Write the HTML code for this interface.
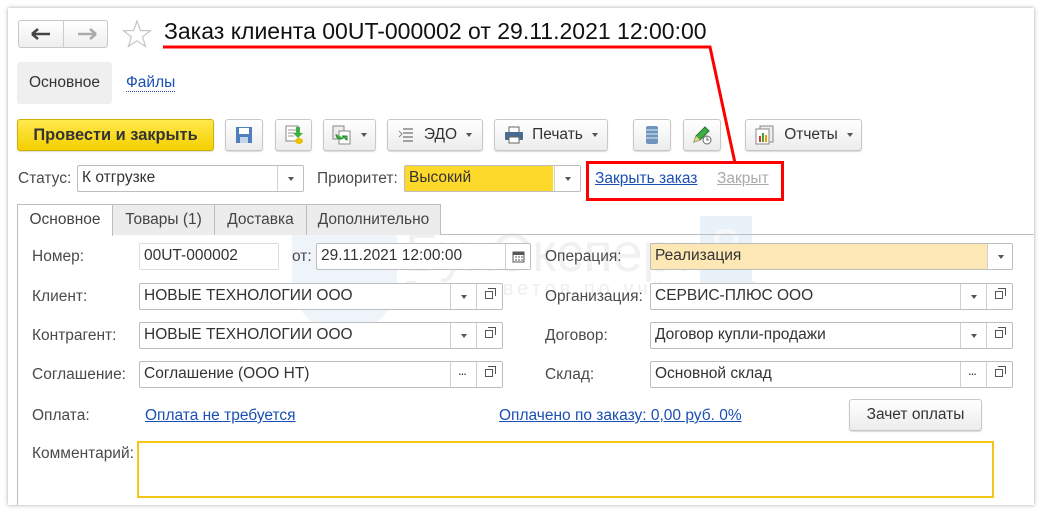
<!DOCTYPE html>
<html><head><meta charset="utf-8">
<style>
*{box-sizing:border-box;margin:0;padding:0}
body{width:1042px;height:513px;background:#fff;position:relative;overflow:hidden;font-family:"Liberation Sans","Noto Sans CJK SC",sans-serif;font-size:15.5px;color:#444}
.a{position:absolute}
.win{left:8px;top:8px;width:1026px;height:497px;background:#fff;box-shadow:0 0 4px rgba(0,0,0,.35)}
.btn{position:absolute;height:32px;top:119px;border:1px solid #c8c8c8;border-radius:3px;background:linear-gradient(#fff,#ececec);box-shadow:0 1px 1px rgba(0,0,0,.15);display:flex;align-items:center;justify-content:center;color:#333;font-size:15.5px}
.dd::after{content:"";display:inline-block;margin-left:9px;border:3px solid transparent;border-top:4px solid #555;border-bottom:0}
.lbl{position:absolute;color:#4a4a4a;font-size:15.5px}
.f{position:absolute;height:27px;border:1px solid #bdbdbd;border-radius:2px;background:#fff;color:#333;font-size:15.5px;padding:3px 0 0 4px;white-space:nowrap;overflow:hidden}
.sb{position:absolute;top:0;width:26px;height:25px;border-left:1px solid #d0d0d0;background:#fff}
.tri{position:absolute;left:10px;top:11px;border:3px solid transparent;border-top:4px solid #555;border-bottom:0}
.opn{position:absolute;left:8px;top:7px;width:8px;height:8px;border:1px solid #555;background:#fff}
.opn::before{content:"";position:absolute;left:2px;top:-4px;width:7px;height:7px;border:1px solid #555;border-left:0;border-bottom:0}
.dots{position:absolute;left:7px;top:1px;font-size:13px;color:#333;letter-spacing:-1px}
a{color:#1a4fb3;text-decoration:underline}
.tab{position:absolute;top:204px;height:31px;border:1px solid #bdbdbd;border-bottom:none;background:#ececec;font-size:15.5px;color:#444;padding:6px 0 0 0;text-align:center;white-space:nowrap}
</style></head><body>
<div class="a win"></div>
<!-- watermark -->
<div class="a" style="left:292px;top:218px;width:105px;height:115px;background:#eef4fa;border-radius:0 0 52px 52px"></div>
<div class="a" style="left:405px;top:222px;font-size:54px;color:#f1f1f1">БухЭксперт</div>
<div class="a" style="left:700px;top:216px;width:52px;height:72px;background:#e9f1f9;color:#f6f9fc;font-size:56px;text-align:center">8</div>
<div class="a" style="left:405px;top:278px;font-size:20px;color:#efefef;letter-spacing:4px">База ответов по учёту в 1С</div>

<!-- nav -->
<div class="a" style="left:18px;top:20px;width:90px;height:28px;border:1px solid #c8c8c8;border-radius:3px;background:linear-gradient(#fff,#eee)"></div>
<div class="a" style="left:63px;top:21px;width:1px;height:26px;background:#ccc"></div>
<svg class="a" style="left:30px;top:27px" width="22" height="14"><path d="M2 7H20M2 7L8 2M2 7L8 12" stroke="#444" stroke-width="2.5" fill="none"/></svg>
<svg class="a" style="left:76px;top:27px" width="22" height="14"><path d="M2 7H20M20 7L14 2M20 7L14 12" stroke="#aaa" stroke-width="2.5" fill="none"/></svg>
<svg class="a" style="left:122px;top:19px" width="30" height="30"><path d="M15 2L18.5 11.5L28.5 11.8L20.6 17.8L23.5 27.5L15 21.8L6.5 27.5L9.4 17.8L1.5 11.8L11.5 11.5Z" fill="none" stroke="#c4c4c4" stroke-width="1.2"/></svg>
<div class="a" style="left:164px;top:18px;font-size:23px;color:#111;white-space:nowrap">Заказ клиента 00UT-000002 от 29.11.2021 12:00:00</div>

<div class="a" style="left:17px;top:62px;width:95px;height:42px;background:#efefef;border-radius:3px"></div>
<div class="a" style="left:29px;top:74px;color:#333">Основное</div>
<div class="a" style="left:126px;top:74px;color:#1a4fb3;border-bottom:1px dotted #1a4fb3;line-height:17px">Файлы</div>

<!-- toolbar -->
<div class="btn" style="left:17px;width:197px;background:linear-gradient(#ffe94d,#f3cf00);border-color:#d1b000;font-weight:bold;font-size:16.4px;color:#333">Провести и закрыть</div>
<div class="btn" style="left:225px;width:38px"><svg width="18" height="18"><rect x="1" y="1" width="16" height="16" fill="#4f7fbf"/><rect x="4" y="2" width="10" height="6" fill="#fff"/><rect x="5" y="11" width="8" height="6" fill="#c5d4ea"/></svg></div>
<div class="btn" style="left:275px;width:37px"><svg width="20" height="20"><rect x="2" y="1" width="12" height="15" fill="#fff" stroke="#888"/><path d="M4 5h8M4 8h8M4 11h6" stroke="#999"/><path d="M12 2v6h-3l5 5 5-5h-3V2z" fill="#3cb043"/><ellipse cx="15" cy="16" rx="4" ry="3" fill="#e8c200"/></svg></div>
<div class="btn dd" style="left:323px;width:53px"><svg width="20" height="20"><rect x="1" y="1" width="11" height="13" fill="#eee" stroke="#888"/><rect x="7" y="6" width="11" height="13" fill="#fff" stroke="#888"/><path d="M4 9c0 6 6 6 8 3l-2-1h5v4l-2-1" fill="#3cb043" stroke="#2a8a30"/></svg></div>
<div class="btn dd" style="left:387px;width:96px"><svg width="18" height="18" style="margin-right:8px"><path d="M5 3h10M5 7h10M5 11h10M5 15h10" stroke="#888" stroke-width="1.5"/><path d="M1 5l3 3-3 3" stroke="#888" fill="none"/></svg>ЭДО</div>
<div class="btn dd" style="left:494px;width:114px"><svg width="20" height="18" style="margin-right:8px"><rect x="5" y="1" width="10" height="6" fill="#fff" stroke="#666"/><rect x="1" y="6" width="18" height="8" rx="1" fill="#4a6b91"/><rect x="5" y="11" width="10" height="6" fill="#fff" stroke="#666"/></svg>Печать</div>
<div class="btn" style="left:633px;width:38px"><svg width="14" height="20"><rect x="1" y="1" width="12" height="18" rx="2" fill="#6f95bd"/><path d="M1 5h12M1 9h12M1 13h12" stroke="#dfe8f2"/></svg></div>
<div class="btn" style="left:683px;width:38px"><svg width="22" height="20"><path d="M3 17l2-6 9-9 4 4-9 9z" fill="#3cb043" stroke="#2d6e2f"/><path d="M3 17l2-6 4 4z" fill="#f0d090"/><circle cx="16" cy="15" r="4" fill="#fff" stroke="#666"/><path d="M16 12v3h2" stroke="#666" fill="none"/></svg></div>
<div class="btn dd" style="left:745px;width:117px"><svg width="22" height="20" style="margin-right:8px"><rect x="6" y="1" width="13" height="16" fill="#eee" stroke="#888"/><rect x="2" y="4" width="13" height="15" fill="#fff" stroke="#888"/><rect x="5" y="11" width="2" height="6" fill="#d33"/><rect x="8" y="8" width="2" height="9" fill="#3a3"/><rect x="11" y="10" width="2" height="7" fill="#e90"/></svg>Отчеты</div>

<!-- status row -->
<div class="lbl" style="left:18px;top:170px">Статус:</div>
<div class="f" style="left:77px;top:165px;width:227px">К отгрузке<div class="sb" style="left:199px"><div class="tri"></div></div></div>
<div class="lbl" style="left:317px;top:170px">Приоритет:</div>
<div class="f" style="left:404px;top:165px;width:177px;background:linear-gradient(90deg,#fdd92b 0,#fdd92b 148px,#fff 148px)">Высокий<div class="sb" style="left:149px"><div class="tri"></div></div></div>
<a class="a" style="left:595px;top:170px">Закрыть заказ</a>
<div class="a" style="left:717px;top:170px;color:#aaa;text-decoration:underline">Закрыт</div>

<!-- tabs -->
<div class="a" style="left:17px;top:234px;width:1017px;height:1px;background:#bdbdbd"></div>
<div class="a" style="left:17px;top:234px;width:1px;height:271px;background:#bdbdbd"></div>
<div class="tab" style="left:112px;width:103px">Товары (1)</div>
<div class="tab" style="left:214px;width:93px">Доставка</div>
<div class="tab" style="left:306px;width:135px">Дополнительно</div>
<div class="tab" style="left:17px;width:96px;background:#fff;height:32px;z-index:2">Основное</div>

<!-- form -->
<div class="lbl" style="left:32px;top:248px">Номер:</div>
<div class="f" style="left:139px;top:243px;width:140px;border-color:#ddd">00UT-000002</div>
<div class="lbl" style="left:292px;top:248px">от:</div>
<div class="f" style="left:316px;top:243px;width:215px">29.11.2021 12:00:00<div class="sb" style="left:188px"><svg style="position:absolute;left:6px;top:6px" width="13" height="13"><rect x="1" y="2" width="11" height="10" fill="none" stroke="#555"/><rect x="1" y="2" width="11" height="3" fill="#555"/><path d="M3 7h2M6 7h2M9 7h2M3 10h2M6 10h2M9 10h2" stroke="#555"/></svg></div></div>
<div class="lbl" style="left:545px;top:248px">Операция:</div>
<div class="f" style="left:650px;top:243px;width:363px;background:linear-gradient(90deg,#fde7b5 0,#fde7b5 336px,#fff 336px)">Реализация<div class="sb" style="left:336px"><div class="tri"></div></div></div>

<div class="lbl" style="left:32px;top:288px">Клиент:</div>
<div class="f" style="left:139px;top:283px;width:364px">НОВЫЕ ТЕХНОЛОГИИ ООО<div class="sb" style="left:310px"><div class="tri"></div></div><div class="sb" style="left:336px"><div class="opn"></div></div></div>
<div class="lbl" style="left:545px;top:288px">Организация:</div>
<div class="f" style="left:650px;top:283px;width:363px">СЕРВИС-ПЛЮС ООО<div class="sb" style="left:309px"><div class="tri"></div></div><div class="sb" style="left:335px"><div class="opn"></div></div></div>

<div class="lbl" style="left:32px;top:327px">Контрагент:</div>
<div class="f" style="left:139px;top:322px;width:364px">НОВЫЕ ТЕХНОЛОГИИ ООО<div class="sb" style="left:310px"><div class="tri"></div></div><div class="sb" style="left:336px"><div class="opn"></div></div></div>
<div class="lbl" style="left:545px;top:327px">Договор:</div>
<div class="f" style="left:650px;top:322px;width:363px">Договор купли-продажи<div class="sb" style="left:309px"><div class="tri"></div></div><div class="sb" style="left:335px"><div class="opn"></div></div></div>

<div class="lbl" style="left:32px;top:366px">Соглашение:</div>
<div class="f" style="left:139px;top:361px;width:364px">Соглашение (ООО НТ)<div class="sb" style="left:310px"><div class="dots">...</div></div><div class="sb" style="left:336px"><div class="opn"></div></div></div>
<div class="lbl" style="left:545px;top:366px">Склад:</div>
<div class="f" style="left:650px;top:361px;width:363px">Основной склад<div class="sb" style="left:309px"><div class="dots">...</div></div><div class="sb" style="left:335px"><div class="opn"></div></div></div>

<div class="lbl" style="left:32px;top:407px">Оплата:</div>
<a class="a" style="left:145px;top:407px">Оплата не требуется</a>
<a class="a" style="left:499px;top:407px">Оплачено по заказу: 0,00 руб. 0%</a>
<div class="btn" style="left:849px;top:399px;width:133px">Зачет оплаты</div>

<div class="lbl" style="left:32px;top:445px">Комментарий:</div>
<div class="a" style="left:137px;top:441px;width:857px;height:57px;border:2px solid #f5c518;background:#fff"></div>

<!-- red annotations -->
<svg class="a" style="left:0;top:0" width="1042" height="513">
<path d="M163 47H710L735 163" stroke="#f00" stroke-width="3" fill="none"/>
<rect x="587.5" y="162.5" width="195" height="37" stroke="#f00" stroke-width="3" fill="none"/>
</svg>
</body></html>
